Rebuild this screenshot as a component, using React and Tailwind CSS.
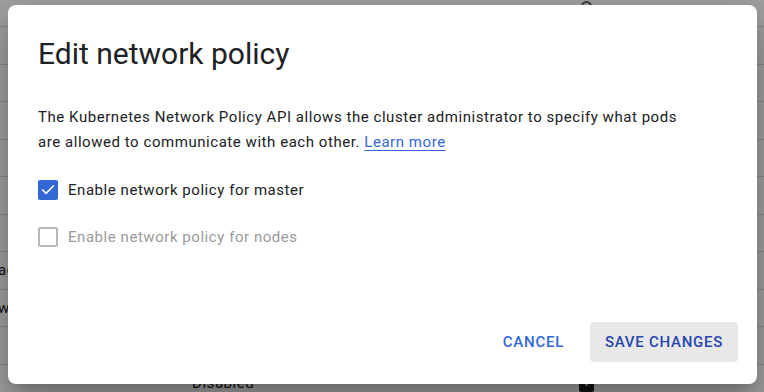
import { Check } from 'lucide-react';

const rows = [
  { text: 'default', x: 195, color: 'text-[#3367d6]', icon: 'circle' },
  {},
  {},
  {},
  {},
  {},
  {},
  { text: 'access', x: -2 },
  { text: 'workload', x: -2 },
  {},
  { text: 'Disabled', x: 192, icon: 'square' },
];

const BackgroundPage = () => (
  <div className="absolute inset-0 bg-white overflow-hidden">
    <div className="flex flex-col">
      {rows.map((row, i) => (
        <div
          key={i}
          className={`relative shrink-0 flex items-center border-b border-[#dadce0] ${i === 0 ? 'h-[27px]' : 'h-[37.5px]'}`}
        >
          {row.text && (
            <span
              className={`absolute text-[15px] leading-[20px] tracking-[0.55px] ${row.color || 'text-[#202124]'} ${i === 0 ? 'top-[2px]' : ''}`}
              style={{ left: row.x }}
            >
              {row.text}
            </span>
          )}
          {row.icon === 'circle' && (
            <span className="absolute left-[581px] top-[1px] w-[11px] h-[11px] rounded-full border-2 border-[#5f6368]" />
          )}
          {row.icon === 'square' && (
            <span className="absolute left-[579px] top-[12px] w-[15px] h-[15px] rounded-[2px] bg-[#202124] flex items-center justify-center">
              <span className="w-[3px] h-[3px] rounded-full bg-white/70" />
            </span>
          )}
        </div>
      ))}
    </div>
  </div>
);

const CheckRow = ({ checked, disabled, label }) => (
  <label className="flex items-center gap-[10px] h-[20px]">
    <span
      className={`w-[20px] h-[20px] rounded-[2px] flex items-center justify-center ${
        checked ? 'bg-[#3367d6]' : 'border-2 border-[#b8b8b8] bg-white'
      }`}
    >
      {checked && <Check size={16} strokeWidth={2.5} className="text-white" />}
    </span>
    <span
      className={`text-[15px] leading-[20px] tracking-[0.55px] ${disabled ? 'text-[#9a9a9a]' : 'text-[#202124]'}`}
    >
      {label}
    </span>
  </label>
);

export default function App() {
  return (
    <div
      className="relative w-[764px] h-[392px] overflow-hidden"
      style={{ fontFamily: 'Roboto, "Liberation Sans", sans-serif' }}
    >
      <BackgroundPage />
      <div className="absolute inset-0 bg-black/[0.37]" />

      {/* dialog */}
      <div className="absolute left-[8px] top-[5px] w-[749px] h-[379px] bg-white rounded-[8px] shadow-[0_11px_15px_-7px_rgba(0,0,0,0.2),0_24px_38px_3px_rgba(0,0,0,0.14),0_9px_46px_8px_rgba(0,0,0,0.12)] flex flex-col px-[30px] pt-[31px]">
        <h1 className="text-[30px] leading-[36px] text-[#202124] font-normal">Edit network policy</h1>

        <p className="mt-[33px] w-[660px] text-[15px] leading-[25px] tracking-[0.55px] text-[#202124]">
          The Kubernetes Network Policy API allows the cluster administrator to specify what pods are
          allowed to communicate with each other.{' '}
          <a href="#" className="text-[#3367d6] underline underline-offset-[3px]">
            Learn more
          </a>
        </p>

        <div className="mt-[25px] flex flex-col gap-[27px]">
          <CheckRow checked label="Enable network policy for master" />
          <CheckRow disabled label="Enable network policy for nodes" />
        </div>

        <div className="mt-auto mb-[22px] mr-[-11px] flex justify-end items-center gap-[10px]">
          <button className="h-[40px] px-[16px] rounded-[4px] text-[15px] font-medium tracking-[0.05em] text-[#3367d6]">
            CANCEL
          </button>
          <button className="h-[40px] w-[148px] rounded-[4px] bg-[#e8e8e8] text-[15px] font-medium tracking-[0.05em] text-[#2846ae]">
            SAVE CHANGES
          </button>
        </div>
      </div>
    </div>
  );
}
